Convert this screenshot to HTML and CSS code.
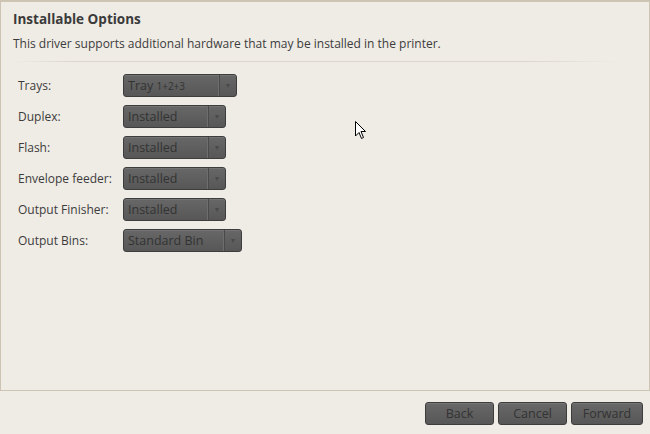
FILE: index.html
```html
<!DOCTYPE html>
<html lang="en">
<head>
    <meta charset="UTF-8">
    <title>Installable Options</title>
    <link rel="stylesheet" href="styles.css">
</head>
<body>
    <div class="panel">
        <h1>Installable Options</h1>
        <p class="intro">This driver supports additional hardware that may be installed in the printer.</p>
        <div class="rule"></div>
        <div class="options">
            <div class="row"><span class="name">Trays:</span><div class="combo w114"><span class="val">Tray <small>1+2+3</small></span><span class="arrow">&#9660;</span></div></div>
            <div class="row"><span class="name">Duplex:</span><div class="combo w103"><span class="val">Installed</span><span class="arrow">&#9660;</span></div></div>
            <div class="row"><span class="name">Flash:</span><div class="combo w103"><span class="val">Installed</span><span class="arrow">&#9660;</span></div></div>
            <div class="row"><span class="name">Envelope feeder:</span><div class="combo w103"><span class="val">Installed</span><span class="arrow">&#9660;</span></div></div>
            <div class="row"><span class="name">Output Finisher:</span><div class="combo w103"><span class="val">Installed</span><span class="arrow">&#9660;</span></div></div>
            <div class="row"><span class="name">Output Bins:</span><div class="combo w119"><span class="val">Standard Bin</span><span class="arrow">&#9660;</span></div></div>
        </div>
        <svg class="cursor" width="12" height="19" viewBox="0 0 12 19"><path d="M0.5 0.5 L0.5 15 L4 11.5 L6.5 17.5 L8.5 16.5 L6 10.5 L10.5 10.5 Z" fill="#fff" stroke="#000" stroke-width="1"/></svg>
    </div>
    <div class="buttons">
        <button class="btn w69">Back</button>
        <button class="btn w69">Cancel</button>
        <button class="btn w72">Forward</button>
    </div>
</body>
</html>
```
FILE: styles.css
```css
body { margin: 0; width: 650px; height: 434px; background: #efebe5; font-family: "Open Sans", sans-serif; font-size: 12px; color: #3c3c3c; }
.panel { position: relative; height: 388px; border: 1px solid #cdc4b4; border-top-width: 2px; box-sizing: content-box; background: #efebe5; }
h1 { margin: 0; padding: 9px 0 0 12px; font-size: 13.5px; font-weight: bold; color: #3a3a3a; line-height: 17px; }
.intro { margin: 7px 0 0 12px; line-height: 17px; color: #3c3c3c; }
.rule { height: 1px; margin: 9px 30px 0 12px; background: linear-gradient(to right, #efebe5, #ddd6cb 10%, #ddd6cb 85%, #efebe5); }
.options { padding: 12px 0 0 17px; display: flex; flex-direction: column; gap: 8px; }
.row { display: flex; align-items: center; height: 23px; }
.name { width: 105px; }
.combo { display: flex; height: 21px; border: 1px solid #3d3d3d; border-radius: 3px; background: linear-gradient(#676767, #575757); color: #333; box-shadow: inset 0 1px 0 #747474; font-size: 12.5px; }
.val { flex: 1; padding-left: 4px; line-height: 21px; }
.val small { font-size: 10px; }
.arrow { width: 16px; border-left: 1px solid #4a4a4a; box-shadow: -1px 0 0 #6e6e6e; font-size: 7px; line-height: 21px; text-align: center; color: #4a4a4a; }
.w114 { width: 112px; }
.w103 { width: 101px; }
.w119 { width: 117px; }
.cursor { position: absolute; left: 354px; top: 119px; }
.buttons { display: flex; justify-content: flex-end; gap: 4px; padding: 11px 7px 0 0; }
.btn { height: 23px; border: 1px solid #3d3d3d; border-radius: 3px; background: linear-gradient(#686868, #575757); color: #333; font-family: "Open Sans", sans-serif; font-size: 12.5px; padding: 0; box-shadow: inset 0 1px 0 #767676; }
.w69 { width: 69px; }
.w72 { width: 72px; }
```
